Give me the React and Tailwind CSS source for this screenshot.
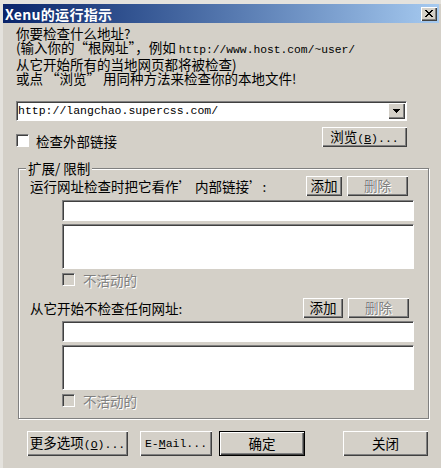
import React from "react";

const raised =
  "bg-[#d4d0c8] shadow-[inset_1px_1px_0_#fff,inset_-1px_-1px_0_#404040,inset_-2px_-2px_0_#808080]";
const sunken =
  "border border-t-[#808080] border-l-[#808080] border-b-white border-r-white shadow-[inset_1px_1px_0_#404040]";
const mono = "font-['Liberation_Mono',monospace]";
const disabledText = "text-[#808080] [text-shadow:1px_1px_0_#fff]";

function Btn({ w, h = 20, className = "", children }) {
  return (
    <div
      className={`${raised} ${w} h-[${h}px] flex items-center justify-center whitespace-nowrap leading-none ${className}`}
    >
      {children}
    </div>
  );
}

function CheckRow({ label, disabled }) {
  return (
    <div className="flex items-center h-[13px]">
      <div className={`w-[13px] h-[13px] ${sunken} ${disabled ? "bg-[#d4d0c8]" : "bg-white"}`} />
      <span className={`ml-[8px] leading-[14px] ${disabled ? disabledText : ""}`}>{label}</span>
    </div>
  );
}

function Section({ label, addW, pr, top }) {
  return (
    <div className="flex flex-col">
      <div className={`flex items-center justify-between pl-[11px] ${pr} h-[20px]`}>
        <span className="leading-[14px] whitespace-nowrap">{label}</span>
        <div className="flex gap-[5px]">
          <div className={`${raised} ${addW} h-[20px] flex items-center justify-center`}>
            <span className="leading-none">添加</span>
          </div>
          <div className={`${raised} w-[61px] h-[20px] flex items-center justify-center`}>
            <span className={`leading-none ${disabledText}`}>删除</span>
          </div>
        </div>
      </div>
      <div className="ml-[43px] w-[352px]">
        <div className={`${top} h-[21px] bg-white ${sunken}`} />
        <div className="mt-[3px] h-[45px] bg-white border border-t-[#808080] border-l-[#808080] border-b-white border-r-white shadow-[inset_1px_1px_0_#404040]" />
        <div className="mt-[4px]">
          <CheckRow label="不活动的" disabled />
        </div>
      </div>
    </div>
  );
}

export default function App() {
  return (
    <div className="w-[441px] h-[468px] bg-[#d4d0c8] text-black text-[13.5px] font-['Noto_Sans_CJK_SC',sans-serif] overflow-hidden border-t-[4px] border-t-[#e4e2dd] border-l-[3px] border-l-[#e4e2dd] pr-[2px]">
      {/* title bar */}
      <div className="h-[19px] flex items-center justify-between bg-linear-to-r from-[#0a246a] to-[#a6caf0] pl-[2px] pr-[2px]">
        <span className="text-white font-bold text-[14px] leading-none tracking-[0.3px]">Xenu的运行指示</span>
        <div className={`${raised} w-[16px] h-[14px] flex items-center justify-center`}>
          <svg width="8" height="7" viewBox="0 0 8 7" shapeRendering="crispEdges">
            <path
              fill="#000"
              d="M0 0h2v1H0z M6 0h2v1H6z M1 1h2v1H1z M5 1h2v1H5z M2 2h4v1H2z M3 3h2v1H3z M2 4h4v1H2z M1 5h2v1H1z M5 5h2v1H5z M0 6h2v1H0z M6 6h2v1H6z"
            />
          </svg>
        </div>
      </div>

      <div className="pl-[13px]">
        {/* intro text */}
        <div className="mt-[3px] leading-[14px] whitespace-nowrap">
          <div>你要检查什么地址?</div>
          <div>
            (输入你的“根网址”，例如 <span className={`${mono} text-[11.3px]`}>http://www.host.com/~user/</span>
          </div>
          <div>从它开始所有的当地网页都将被检查)</div>
          <div>或点 “浏览” 用同种方法来检查你的本地文件!</div>
        </div>

        {/* combo */}
        <div className={`mt-[16px] w-[391px] h-[20px] bg-white ${sunken} flex items-center justify-between pl-[1px] pr-[1px]`}>
          <span className={`${mono} text-[11.5px] leading-none`}>http://langchao.supercss.com/</span>
          <div className={`${raised} w-[17px] h-[16px] flex items-center justify-center`}>
            <svg width="7" height="4" viewBox="0 0 7 4" shapeRendering="crispEdges">
              <path fill="#000" d="M0 0h7v1H0z M1 1h5v1H1z M2 2h3v1H2z M3 3h1v1H3z" />
            </svg>
          </div>
        </div>

        {/* checkbox + browse */}
        <div className="mt-[6px] w-[391px] flex items-start justify-between">
          <div className="mt-[7px] flex items-center h-[13px]">
            <div className={`w-[13px] h-[13px] bg-white ${sunken}`} />
            <span className="ml-[7px] leading-[14px]">检查外部链接</span>
          </div>
          <div className={`${raised} w-[85px] h-[20px] flex items-center justify-center`}>
            <span className="leading-none">
              浏览<span className={`${mono} text-[11.5px]`}>(<u>B</u>)...</span>
            </span>
          </div>
        </div>

        {/* group box */}
        <div className="relative mt-[21px] ml-[2px] w-[411px] h-[251px] border border-[#808080] shadow-[1px_1px_0_#fff,inset_1px_1px_0_#fff] pt-[7px]">
          <span className="absolute -top-[8px] left-[7px] px-[2px] bg-[#d4d0c8] leading-[14px] whitespace-nowrap">
            扩展/ 限制
          </span>
          <Section label="运行网址检查时把它看作’ 内部链接’:" addW="w-[36px]" pr="pr-[20px]" top="mt-[4px]" />
          <div className="mt-[12px]">
            <Section label="从它开始不检查任何网址:" addW="w-[40px]" pr="pr-[19px]" top="mt-[3px]" />
          </div>
        </div>

        {/* bottom buttons */}
        <div className="mt-[12px] ml-[11px] flex items-start">
          <div className={`${raised} w-[101px] h-[25px] flex items-center justify-center`}>
            <span className="leading-none">
              更多选项<span className={`${mono} text-[11.5px]`}>(<u>O</u>)...</span>
            </span>
          </div>
          <div className={`${raised} ml-[12px] w-[72px] h-[25px] flex items-center justify-center`}>
            <span className={`${mono} text-[11.5px] leading-none`}>
              E-<u>M</u>ail...
            </span>
          </div>
          <div className="ml-[7px] w-[86px] h-[25px] border border-black bg-[#d4d0c8] shadow-[inset_1px_1px_0_#fff,inset_-1px_-1px_0_#404040,inset_-2px_-2px_0_#808080] flex items-center justify-center">
            <span className="leading-none">确定</span>
          </div>
          <div className={`${raised} ml-[38px] w-[85px] h-[25px] flex items-center justify-center`}>
            <span className="leading-none">关闭</span>
          </div>
        </div>
      </div>
    </div>
  );
}
